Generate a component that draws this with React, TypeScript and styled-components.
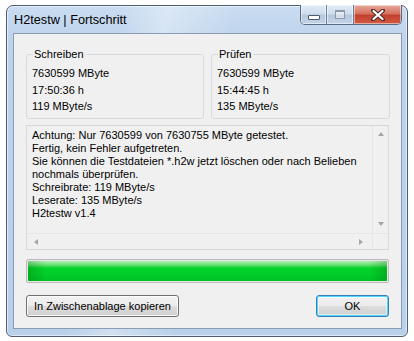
import styled, { createGlobalStyle } from "styled-components";

const GlobalStyle = createGlobalStyle`
  html, body {
    margin: 0;
    padding: 0;
    background: #ffffff;
  }
  body {
    font-family: "Liberation Sans", Arial, sans-serif;
  }
`;

const Page = styled.div`
  width: 414px;
  height: 341px;
  padding: 5px 0 0 6px;
  box-sizing: border-box;
`;

const Frame = styled.div`
  width: 402px;
  height: 332px;
  box-sizing: border-box;
  border: 1px solid #4f5d70;
  border-radius: 7px 7px 6px 6px;
  background:
    linear-gradient(100deg, rgba(255, 255, 255, 0) 25%, rgba(255, 255, 255, 0.35) 35%, rgba(255, 255, 255, 0) 50%),
    linear-gradient(180deg, #c9dcf1 0%, #bcd3ec 12%, #b8d0ea 100%);
  box-shadow: inset 0 0 0 1px rgba(255, 255, 255, 0.55);
  padding: 0 5px 7px 6px;
  display: flex;
  flex-direction: column;
`;

const TitleBar = styled.div`
  height: 27px;
  display: flex;
  align-items: flex-start;
  justify-content: space-between;
`;

const Caption = styled.span`
  font-size: 12.7px;
  color: #000;
  line-height: 15px;
  margin-top: 7px;
  padding-left: 1px;
`;

const CaptionButtons = styled.div`
  display: flex;
  margin-top: -1px;
  border: 1px solid #5a6a80;
  border-top: none;
  border-radius: 0 0 5px 5px;
  overflow: hidden;
  height: 19px;
`;

const CapBtn = styled.div<{ $close?: boolean; $w: number }>`
  width: ${(p) => p.$w}px;
  height: 19px;
  display: flex;
  align-items: center;
  justify-content: center;
  box-shadow: inset 0 0 0 1px rgba(255, 255, 255, 0.5);
  background: ${(p) =>
    p.$close
      ? "linear-gradient(180deg, #e9a99c 0%, #d7715f 45%, #c2402f 55%, #d45a43 100%)"
      : "linear-gradient(180deg, #e3ecf7 0%, #cfdcec 45%, #b6c8dd 55%, #c4d5e9 100%)"};
  & + & {
    border-left: 1px solid #6d7f96;
  }
`;

const MinGlyph = styled.div`
  width: 10px;
  height: 3px;
  margin-top: 5px;
  background: #fff;
  border: 1px solid #4b5a6e;
  border-radius: 1px;
`;

const MaxGlyph = styled.div`
  width: 8px;
  height: 6px;
  border: 1px solid #8b9aae;
  border-top-width: 2px;
  background: rgba(255, 255, 255, 0.4);
`;

const Client = styled.div`
  flex: 1;
  border: 1px solid #8a9cb3;
  background: #f0f0f0;
  padding: 20px 12px 0 12px;
  display: flex;
  flex-direction: column;
`;

const Groups = styled.div`
  display: grid;
  grid-template-columns: 178px 179px;
  column-gap: 7px;
`;

const GroupBox = styled.fieldset`
  margin: 0;
  height: 65px;
  box-sizing: border-box;
  border: 1px solid #d5dadf;
  border-radius: 3px;
  padding: 0 5px;
  position: relative;
`;

const GroupLabel = styled.span`
  position: absolute;
  top: -8px;
  left: 6px;
  padding: 0 2px 0 1px;
  background: #f0f0f0;
  font-size: 11px;
  line-height: 14px;
  color: #000;
`;

const GroupLines = styled.div`
  padding-top: 10px;
  font-size: 11px;
  line-height: 16.5px;
  color: #000;
`;

const Memo = styled.div`
  margin-top: 6px;
  height: 125px;
  box-sizing: border-box;
  border: 1px solid #d5d9de;
  display: grid;
  grid-template-columns: 1fr 16px;
  grid-template-rows: 1fr 16px;
`;

const MemoText = styled.div`
  padding: 3px 5px;
  font-size: 11px;
  line-height: 13px;
  color: #000;
  overflow: hidden;
  white-space: pre-line;
`;

const ScrollV = styled.div`
  border-left: 1px solid #e6e6e6;
  display: flex;
  flex-direction: column;
  justify-content: space-between;
  align-items: center;
  padding: 6px 0 7px;
`;

const ScrollH = styled.div`
  border-top: 1px solid #e6e6e6;
  display: flex;
  justify-content: space-between;
  align-items: center;
  padding: 0 9px 0 7px;
`;

const Corner = styled.div`
  border-top: 1px solid #e6e6e6;
  border-left: 1px solid #e6e6e6;
  background: #f0f0f0;
`;

const Arrow = styled.div<{ $dir: "up" | "down" | "left" | "right" }>`
  width: 0;
  height: 0;
  border-style: solid;
  border-color: transparent;
  ${(p) =>
    p.$dir === "up"
      ? "border-width: 0 3.5px 4px 3.5px; border-bottom-color: #a5a5a5;"
      : p.$dir === "down"
      ? "border-width: 4px 3.5px 0 3.5px; border-top-color: #a5a5a5;"
      : p.$dir === "left"
      ? "border-width: 3.5px 4px 3.5px 0; border-right-color: #a5a5a5;"
      : "border-width: 3.5px 0 3.5px 4px; border-left-color: #a5a5a5;"}
`;

const Progress = styled.div`
  margin-top: 9px;
  height: 24px;
  box-sizing: border-box;
  border: 1px solid #bcbcbc;
  border-radius: 2px;
  padding: 1px;
  background: #e6e6e6;
`;

const ProgressFill = styled.div`
  height: 100%;
  border-radius: 1px;
  background:
    linear-gradient(90deg, rgba(0, 90, 0, 0.25) 0%, rgba(0, 0, 0, 0) 5%, rgba(0, 0, 0, 0) 95%, rgba(0, 90, 0, 0.25) 100%),
    linear-gradient(180deg, #b5f0b5 0%, #6ee27a 18%, #06d22b 35%, #00cd2a 70%, #00c126 100%);
`;

const ButtonRow = styled.div`
  margin-top: 12px;
  display: flex;
  justify-content: space-between;
`;

const Button = styled.div<{ $default?: boolean; $w: number }>`
  width: ${(p) => p.$w}px;
  height: 22px;
  box-sizing: border-box;
  border: 1px solid ${(p) => (p.$default ? "#3c7fb1" : "#707070")};
  border-radius: 3px;
  background: linear-gradient(180deg, #f2f2f2 0%, #ebebeb 50%, #dddddd 51%, #cfcfcf 100%);
  box-shadow: ${(p) =>
    p.$default
      ? "inset 0 0 0 1px #48d8fb, inset 0 0 0 2px rgba(255,255,255,0.5)"
      : "inset 0 0 0 1px rgba(255,255,255,0.8)"};
  display: flex;
  align-items: center;
  justify-content: center;
  font-size: 11px;
  color: #000;
`;

const schreiben = ["7630599 MByte", "17:50:36 h", "119 MByte/s"];
const pruefen = ["7630599 MByte", "15:44:45 h", "135 MByte/s"];

const log = [
  "Achtung: Nur 7630599 von 7630755 MByte getestet.",
  "Fertig, kein Fehler aufgetreten.",
  "Sie können die Testdateien *.h2w jetzt löschen oder nach Belieben",
  "nochmals überprüfen.",
  "Schreibrate: 119 MByte/s",
  "Leserate: 135 MByte/s",
  "H2testw v1.4",
].join("\n");

const CloseGlyph = () => (
  <svg width="16" height="12" viewBox="0 0 16 12">
    <path
      d="M3 1.5 L13 10.5 M13 1.5 L3 10.5"
      stroke="#4a2a24"
      strokeWidth="4"
      strokeLinecap="round"
    />
    <path
      d="M3.5 2 L12.5 10 M12.5 2 L3.5 10"
      stroke="#ffffff"
      strokeWidth="2.2"
      strokeLinecap="round"
    />
  </svg>
);

export default function App() {
  return (
    <>
      <GlobalStyle />
      <Page>
        <Frame>
          <TitleBar>
            <Caption>H2testw | Fortschritt</Caption>
            <CaptionButtons>
              <CapBtn $w={25}>
                <MinGlyph />
              </CapBtn>
              <CapBtn $w={26}>
                <MaxGlyph />
              </CapBtn>
              <CapBtn $w={47} $close>
                <CloseGlyph />
              </CapBtn>
            </CaptionButtons>
          </TitleBar>
          <Client>
            <Groups>
              <GroupBox>
                <GroupLabel>Schreiben</GroupLabel>
                <GroupLines>
                  {schreiben.map((l) => (
                    <div key={l}>{l}</div>
                  ))}
                </GroupLines>
              </GroupBox>
              <GroupBox>
                <GroupLabel>Prüfen</GroupLabel>
                <GroupLines>
                  {pruefen.map((l) => (
                    <div key={l}>{l}</div>
                  ))}
                </GroupLines>
              </GroupBox>
            </Groups>
            <Memo>
              <MemoText>{log}</MemoText>
              <ScrollV>
                <Arrow $dir="up" />
                <Arrow $dir="down" />
              </ScrollV>
              <ScrollH>
                <Arrow $dir="left" />
                <Arrow $dir="right" />
              </ScrollH>
              <Corner />
            </Memo>
            <Progress>
              <ProgressFill />
            </Progress>
            <ButtonRow>
              <Button $w={153}>In Zwischenablage kopieren</Button>
              <Button $w={73} $default>
                OK
              </Button>
            </ButtonRow>
          </Client>
        </Frame>
      </Page>
    </>
  );
}
